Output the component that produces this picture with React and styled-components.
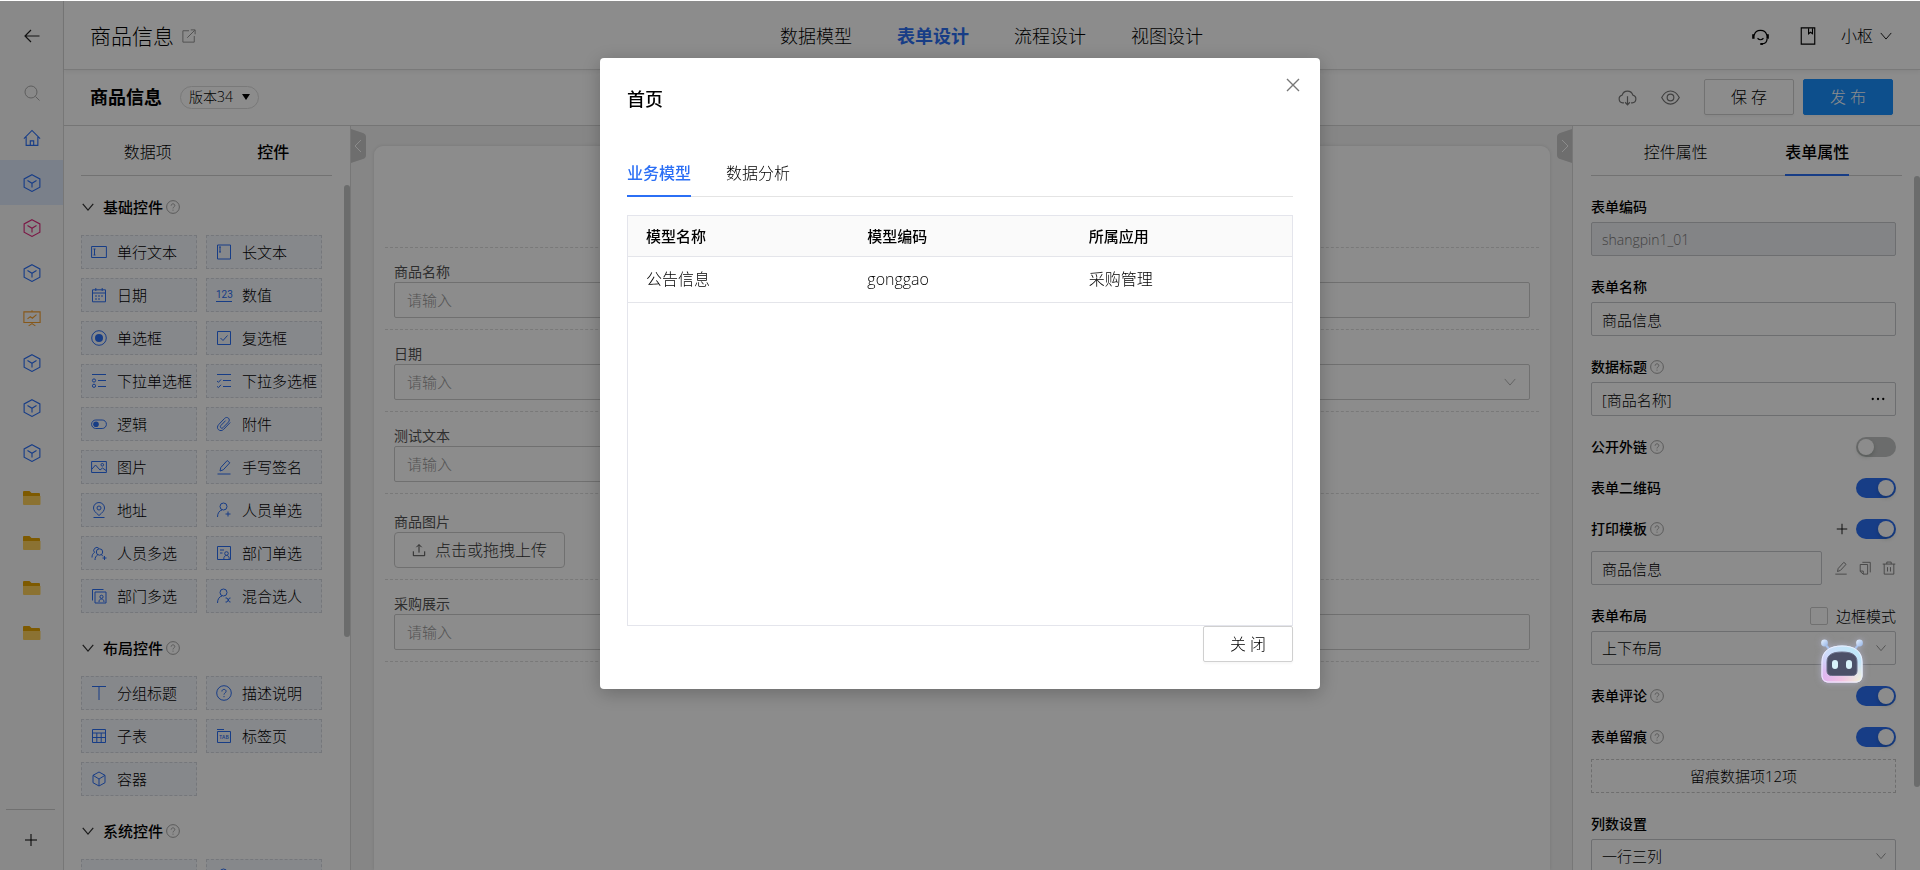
import React from 'react'
import styled, { createGlobalStyle } from 'styled-components'

const BLUE = '#2b6ff5'

const GlobalStyle = createGlobalStyle`
* { box-sizing: border-box; }
body {
  margin: 0;
  background: #fff;
}
body, button, input, select, textarea {
  font-family: "Open Sans", "Noto Sans CJK SC", sans-serif;
  font-weight: 300;
  color: #000;
}
button {
  border: 0;
  padding: 0;
  background: none;
  cursor: pointer;
}
h1, h2, h3, ul { margin: 0; padding: 0; }
ul { list-style: none; }
a { color: inherit; text-decoration: none; }
`

/* ---------- icons ---------- */

const Svg = styled.svg`
  display: block;
  flex: none;
  width: ${p => p.$size || 16}px;
  height: ${p => p.$size || 16}px;
  color: ${p => p.$color || 'currentColor'};
  fill: none;
  stroke: currentColor;
  stroke-width: ${p => p.$stroke || 1};
`

const person = <><circle cx="7.5" cy="4.5" r="3.5" /><path d="M1.5 15c0-4 2-6.5 4.500-7" /></>

const shapes = {
  back: <path d="M15.500 8H1M7 2L1 8l6 6" />,
  search: <><circle cx="7" cy="7" r="6" /><path d="M11.500 11.500L15.500 15.500" /></>,
  home: <><path d="M.8 8.500L8 1.300l7.200 7.200M2.800 7v7.500h10.400V7" /><path d="M6.500 14.500v-4h3v4" /></>,
  cube: <><path d="M8 .6l7 3.800v7.400L8 15.500 1 11.800V4.400z" /><path d="M4 5.800L8 8.200l4-2.400M8 8.200V12" /></>,
  box: <><path d="M8 1l6 3.300v7.400L8 15l-6-3.300V4.300z" /><path d="M2 4.300L8 8l6-3.700M8 8v7" /></>,
  board: <><path d="M.8 2.500h14.400v9.500H.8zM8 1v1.500M8 12v1.500M5 15l3-2 3 2" /><path d="M4 8.800l2.500-2 1.800 1.400L12 5" /></>,
  plus: <path d="M8 2v12M2 8h12" />,
  open: <><path d="M8 2H1v13h13V8" /><path d="M6 10l8.500-8.500M10 1h5v5" /></>,
  down: <path d="M2 4.500l6 7 6-7" />,
  close: <path d="M2 2l12 12M14 2L2 14" />,
  dots: <g fill="currentColor" stroke="none"><circle cx="2" cy="8" r="1.300" /><circle cx="8" cy="8" r="1.300" /><circle cx="14" cy="8" r="1.300" /></g>,
  help: <><circle cx="8" cy="8" r="7.300" /><path d="M5.900 6.500c0-1.400 1-2.100 2.100-2.100s2.100.8 2.100 1.900c0 1.500-2.100 1.700-2.100 3.300M8 11v1.200" /></>,
  headset: <><path d="M2.600 7a5.600 5.600 0 0 1 10.800 0" /><path d="M2 6.200v3.600M14 6.200v3.600" strokeWidth="2" /><path d="M13.500 10c0 2.500-1.500 4-4.500 4.200M5.500 9.500c1.500 1.500 3.500 1.500 5 0" /><path d="M7.800 14.300h2.200" strokeWidth="1.600" /></>,
  book: <><path d="M2 .8h12v14.400H2z" /><path d="M8.500 1v5l1.700-1.300L12 6V1" /></>,
  cloud: <><path d="M5 12.500H4A3.300 3.300 0 0 1 3.500 6 4.700 4.700 0 0 1 12.500 6 3.300 3.300 0 0 1 12 12.500h-1" /><path d="M8 7v7M6 12l2 2.200 2-2.200" /></>,
  eye: <><path d="M.6 8C2.500 4.300 5 2.500 8 2.500S13.500 4.300 15.400 8c-1.900 3.700-4.400 5.500-7.400 5.500S2.500 11.700.6 8z" /><circle cx="8" cy="8" r="2.800" /></>,
  line: <><path d="M.6 2.500h14.800v11H.6z" /><path d="M2.500 5h2M2.500 11h2M3.500 5v6" /></>,
  area: <><path d="M1.500 1h13v14h-13z" /><path d="M3 3h2M3 8h2M4 3v5" /></>,
  date: <><path d="M1.500 2.800h13v12h-13zM1.500 6h13M4.800 1v3M11.200 1v3" /><path d="M4 9h2M7 9h2M10 9h2M4 12h2M7 12h2" /></>,
  radio: <><circle cx="8" cy="8" r="7.300" /><circle cx="8" cy="8" r="4" fill="currentColor" stroke="none" /></>,
  check: <><path d="M1.500 1.500h13v13h-13z" /><path d="M4.500 8l2.500 2.500 4.500-5" /></>,
  list: <><path d="M1 1.500h14M7 7.500h8M7 13.500h8" /><circle cx="3" cy="7.500" r="1.600" /><circle cx="3" cy="12.800" r="1.600" /></>,
  multi: <><path d="M1 1.500h14M7 7.500h8M7 13.500h8" /><path d="M1 8l1.500 1.300L5 6.500M1 13.300l1.500 1.300L5 11.800" /></>,
  toggle: <><rect x=".6" y="4" width="14.800" height="8.500" rx="4.200" /><circle cx="5" cy="8.200" r="2.800" fill="currentColor" stroke="none" /></>,
  clip: <path d="M14.200 6.500l-6.500 6.800c-1.500 1.600-3.700 1.700-5.200.4s-1.300-3.600.1-5l6-6.300c1.100-1.200 2.800-1.200 3.900-.2s1 2.700 0 3.800l-5.500 5.700c-.7.700-1.600.7-2.200.1s-.6-1.500 0-2.200l4.800-5" />,
  image: <><path d="M.6 2.500h14.800v11H.6z" /><path d="M1 10l3.500-4 4.500 5 2.500-2 3.500 2.500" /><circle cx="11.300" cy="5.800" r="1.300" /></>,
  pen: <><path d="M1.500 15h13M4 12l.8-3.500 6.400-7 2.600 2.300-6.500 7z" /></>,
  pin: <><path d="M8 13.500C4.500 10.500 2.500 8.500 2.500 6a5.500 5.500 0 0 1 11 0c0 2.500-2 4.500-5.500 7.500z" /><circle cx="8" cy="6" r="2" /><path d="M2.500 15.500h11" /></>,
  user: <>{person}<path d="M12 9.500v5M9.500 12h5" /></>,
  users: <><path d="M3.500 7.500a3 3 0 1 1 4.500-4" /><circle cx="8.500" cy="7" r="3.200" /><path d="M1 12.500c0-2.500.8-4 2.500-5M4 15c0-2.500 1-4 2.800-5.300M10.500 9.800l1.500 1.500M13.500 11v4M11.500 13h4" /></>,
  dept: <><path d="M1.500 1.500h13v13h-13zM4 5h4M4 8h2.500" /><circle cx="10.500" cy="8.500" r="1.800" /><path d="M7.800 14c0-2.300 1-3.500 2.700-3.500s2.700 1.200 2.700 3.500" /></>,
  depts: <><path d="M4 4h11v11H4zM1.500 12.500v-11h11" /><circle cx="10.500" cy="8.800" r="1.600" /><path d="M8 14c0-2.200 1-3 2.500-3s2.500 1 2.500 3" /></>,
  mixed: <>{person}<path d="M9.500 10h1.500l2.500 4h1M9.500 14h1.500l2.500-4h1" /></>,
  title: <path d="M1 1.500h14M8 1.500V15" />,
  grid: <path d="M1.500 1.500h13v13h-13zM1.500 5h13M1.500 9.500h13M5.800 5v9.500M10.200 5v9.500" />,
  tab: <><path d="M1.500 3.500h13v11h-13zM1 1.500h7" /><text x="8" y="11" fontSize="5" fontWeight="600" textAnchor="middle" fill="currentColor" stroke="none">TAB</text></>,
  upload: <path d="M1.500 9.500v5h13v-5M8 11V2M5 4.800L8 1.800l3 3" />,
  copy: <><path d="M5 1.500h9V13" /><path d="M2.500 4h8.500v11H6l-3.500-3z" /><path d="M2.500 11.500H6V15" /></>,
  trash: <path d="M.8 3.500h14.400M5.500 3.500V1.200h5v2.300M2.500 3.500v11.500h11V3.500M6.300 7v5M9.700 7v5" />,
}

const Icon = ({ name, ...rest }) => (
  <Svg viewBox="0 0 16 16" aria-hidden="true" {...rest}>{shapes[name]}</Svg>
)

const NumberIcon = styled.span`
  flex: none;
  width: 16px;
  border-bottom: 1px solid ${BLUE};
  color: ${BLUE};
  font-family: Roboto, sans-serif;
  font-size: 10px;
  line-height: 12px;
  font-weight: 400;
  text-align: center;
`

const FolderSvg = styled.svg`
  display: block;
  width: 18px;
  height: 16px;
`
const Folder = () => (
  <FolderSvg viewBox="0 0 18 16" aria-hidden="true">
    <path d="M0 2a1 1 0 0 1 1-1h5.500L8.500 3H16a1 1 0 0 1 1 1v4H0z" fill="#e6a400" />
    <path d="M0 6h17.500v8a1 1 0 0 1-1 1H1a1 1 0 0 1-1-1z" fill="#fdcf5c" />
  </FolderSvg>
)

/* ---------- page shell ---------- */

const Page = styled.div`
  display: grid;
  grid-template-columns: 64px minmax(0, 1fr);
  height: 100vh;
  padding-top: 1px;
  overflow: hidden;
`

const Rail = styled.nav`
  display: flex;
  flex-direction: column;
  justify-content: space-between;
  background: #fafafa;
  border-right: 1px solid #d9d9d9;
`
const RailLink = styled.a`
  display: flex;
  align-items: center;
  justify-content: center;
  height: 45px;
  background: ${p => p.$active ? '#dfe9fb' : 'transparent'};
`
const BackLink = styled(RailLink)`
  height: 69px;
`
const RailFoot = styled.div`
  display: flex;
  justify-content: center;
  margin: 0 8px 0 6px;
  padding: 22px 0;
  border-top: 1px solid #ccc;
`

const Main = styled.div`
  display: flex;
  flex-direction: column;
  min-width: 0;
  min-height: 0;
`
const TopBar = styled.header`
  display: grid;
  grid-template-columns: 1fr auto 1fr;
  align-items: center;
  flex: none;
  height: 69px;
  padding: 2px 27px 0 26px;
  border-bottom: 1px solid #dcdcdc;
  box-shadow: 0 2px 4px rgba(0, 0, 0, .06);
`
const Cluster = styled.div`
  display: flex;
  align-items: center;
  gap: ${p => p.$gap}px;
  justify-content: ${p => p.$end ? 'flex-end' : 'flex-start'};
`
const AppName = styled.h1`
  font-size: 21px;
  line-height: 28px;
  font-weight: 300;
`
const TopNav = styled.nav`
  display: flex;
  gap: 45px;
`
const TopLink = styled.a`
  font-size: 18px;
  line-height: 28px;
  font-weight: ${p => p.$active ? 700 : 300};
  color: ${p => p.$active ? BLUE : 'inherit'};
`
const UserButton = styled.button`
  display: flex;
  align-items: center;
  gap: 6px;
  font-size: 16px;
  line-height: 24px;
`

const ToolBar = styled.div`
  display: flex;
  align-items: center;
  justify-content: space-between;
  flex: none;
  height: 56px;
  padding: 0 27px 1px 26px;
  border-bottom: 1px solid #d6d6d6;
`
const FormName = styled.h2`
  font-size: 18px;
  line-height: 28px;
  font-weight: 700;
`
const Version = styled.button`
  display: flex;
  align-items: center;
  gap: 9px;
  height: 23px;
  padding: 0 8px;
  border: 1px solid #dcdcdc;
  border-radius: 12px;
  font-size: 14px;
  line-height: 20px;
`
const Caret = styled.span`
  border: 4px solid transparent;
  border-top: 6px solid #000;
  border-bottom: 0;
`
const Button = styled.button`
  width: 90px;
  height: 36px;
  border: 1px solid ${p => p.$primary ? '#1890ff' : '#d0d0d0'};
  border-radius: 2px;
  background: ${p => p.$primary ? '#1890ff' : '#fff'};
  color: ${p => p.$primary ? '#fff' : '#000'};
  box-shadow: 0 2px 2px rgba(0, 0, 0, .03);
  font-size: 16px;
  line-height: 24px;
`
const Buttons = styled.div`
  display: flex;
  gap: 9px;
`

const Work = styled.div`
  display: grid;
  grid-template-columns: 287px minmax(0, 1fr) 348px;
  flex: 1;
  min-height: 0;
`

const Panel = styled.aside`
  display: flex;
  flex-direction: column;
  min-height: 0;
  overflow: hidden;
  border: 0 solid #d9d9d9;
  border-${p => p.$side}-width: 1px;
`
const PanelTabs = styled.div`
  display: flex;
  flex: none;
  justify-content: space-around;
  height: 50px;
  margin: 0 18px 0 ${p => p.$left}px;
  padding: 0 ${p => p.$inset || 0}px;
  border-bottom: 1px solid #cfcfcf;
`
const PanelTab = styled.button`
  height: 50px;
  padding-top: 4px;
  border-bottom: 2px solid ${p => p.$line ? BLUE : 'transparent'};
  font-size: 16px;
  line-height: 24px;
  font-weight: ${p => p.$active ? 500 : 300};
`
const PanelBody = styled.div`
  display: flex;
  justify-content: space-between;
  flex: 1;
  min-height: 0;
  overflow: hidden;
`
const ScrollTrack = styled.div`
  width: 6px;
  padding-top: ${p => p.$top}px;
`
const ScrollThumb = styled.div`
  height: ${p => p.$share}%;
  border-radius: 3px;
  background: #c3c5c5;
`

/* ---------- control palette ---------- */

const Palette = styled.div`
  padding: 21px 0 0 17px;
`
const SectionTitle = styled.h3`
  display: flex;
  align-items: center;
  height: 20px;
  margin-bottom: 18px;
  font-size: 15px;
  line-height: 20px;
  font-weight: 500;

  > svg:first-child { margin-right: 8px; }
  > svg:last-child { margin-left: 3px; }
`
const Controls = styled.ul`
  display: grid;
  grid-template-columns: 116px 116px;
  gap: 9px;
  margin-bottom: 25px;
`
const Control = styled.button`
  display: flex;
  align-items: center;
  gap: 10px;
  width: 100%;
  height: 34px;
  padding-left: 9px;
  border: 1px dashed #d6d9e0;
  background: #f5f7fd;
  font-size: 15px;
  line-height: 20px;
  white-space: nowrap;
`

/* ---------- canvas ---------- */

const Canvas = styled.main`
  display: grid;
  grid-template-columns: 23px minmax(0, 1fr) 22px;
  background: #f5f5f5;
`
const Handle = styled.button`
  display: block;
  width: 15px;
  height: 34px;
  margin-top: 3px;
  justify-self: ${p => p.$end ? 'end' : 'start'};
`
const HandleShape = styled.svg`
  display: block;
  width: 15px;
  height: 34px;
`
const Sheet = styled.div`
  margin-top: 20px;
  padding: 101px 11px 0;
  border-radius: 9px 9px 0 0;
  background: #fff;
  box-shadow: 0 0 4px rgba(0, 0, 0, .12);
`
const FormRow = styled.div`
  display: grid;
  grid-template-columns: repeat(3, minmax(0, 1fr));
  padding: ${p => p.$tall ? 18 : 14}px 9px 11px;
  border-bottom: 1px dashed #dcdcdc;

  &:first-child { border-top: 1px dashed #dcdcdc; }
`
const FormItem = styled.div`
  grid-column: ${p => p.$wide ? '1 / -1' : 'auto'};
`
const FormLabel = styled.label`
  display: block;
  font-size: 14px;
  line-height: 20px;
  font-weight: 400;
  color: #555;
`
const Stack = styled.div`
  display: grid;
  align-items: center;

  > * { grid-area: 1 / 1; }
  > svg, > button { justify-self: end; margin-right: ${p => p.$inset}px; }
  > svg { pointer-events: none; }
`
const FormInput = styled.input`
  width: 100%;
  height: 36px;
  padding: 0 12px;
  border: 1px solid #ccc;
  border-radius: 2px;
  background: #fff;
  font-size: 15px;

  &::placeholder { color: #999; opacity: 1; }
`
const Upload = styled.button`
  display: flex;
  align-items: center;
  gap: 9px;
  height: 36px;
  padding: 0 17px;
  border: 1px solid #ccc;
  border-radius: 4px;
  font-size: 16px;
  line-height: 24px;
  color: #333;
`

/* ---------- property panel ---------- */

const Props = styled.div`
  display: flex;
  flex-direction: column;
  gap: 21px;
  flex: 1;
  padding: 21px 18px 0;
`
const Field = styled.div`
  display: flex;
  flex-direction: column;
  gap: ${p => p.$gap || 5}px;
`
const FieldHead = styled.div`
  display: flex;
  align-items: center;
  gap: 3px;
  height: 20px;
`
const FieldLabel = styled.label`
  font-size: 14px;
  line-height: 20px;
  font-weight: 500;
`
const HeadEnd = styled.div`
  display: flex;
  align-items: center;
  gap: 7px;
  margin-left: auto;
`
const TextInput = styled.input`
  width: 100%;
  min-width: 0;
  height: 34px;
  padding: 0 10px;
  border: 1px solid #c6c8cc;
  border-radius: 2px;
  background: #fff;
  font-size: 15px;

  &:disabled {
    background: #eff0f4;
    color: #777;
    font-size: 14px;
  }
`
const Select = styled.select`
  appearance: none;
  width: 100%;
  height: 34px;
  padding: 0 10px;
  border: 1px solid #c6c8cc;
  border-radius: 2px;
  background: #fff;
  font-size: 15px;
`
const InputLine = styled.div`
  display: flex;
  align-items: center;
  gap: 10px;

  > input { margin-right: 2px; }
`
const Switch = styled.input`
  appearance: none;
  display: flex;
  align-items: center;
  width: 40px;
  height: 20px;
  margin: 0;
  padding: 0 2px;
  border-radius: 10px;
  background: #c3c5c5;

  &::before {
    content: "";
    width: 16px;
    height: 16px;
    border-radius: 50%;
    background: #fff;
    box-shadow: 0 2px 4px rgba(0, 35, 11, .2);
  }
  &:checked { justify-content: flex-end; background: ${BLUE}; }
`
const CheckLabel = styled.label`
  display: flex;
  align-items: center;
  gap: 8px;
  font-size: 15px;
  line-height: 20px;
`
const CheckBox = styled.input`
  appearance: none;
  width: 18px;
  height: 18px;
  margin: 0;
  border: 1px solid #ccc;
  border-radius: 2px;
`
const TraceButton = styled.button`
  height: 34px;
  border: 1px dashed #c8c8c8;
  font-size: 15px;
  line-height: 20px;
`

/* ---------- dialog ---------- */

const Mask = styled.div`
  position: fixed;
  inset: 1px 0 0;
  display: flex;
  align-items: flex-start;
  justify-content: center;
  padding-top: 57px;
  background: rgba(0, 0, 0, .45);
`
const Dialog = styled.section`
  position: relative;
  width: 720px;
  max-width: 96vw;
  padding: 27px;
  border-radius: 4px;
  background: #fff;
  box-shadow: 0 4px 20px rgba(0, 0, 0, .25);
`
const DialogTitle = styled.h2`
  margin-bottom: 36px;
  font-size: 18px;
  line-height: 28px;
  font-weight: 500;
`
const DialogClose = styled.button`
  position: absolute;
  top: 19px;
  right: 19px;
  color: #777;
`
const DialogTabs = styled.div`
  display: flex;
  gap: 35px;
  height: 48px;
  margin-bottom: 18px;
  border-bottom: 1px solid #e4e4e4;
`
const DialogTab = styled.button`
  height: 48px;
  padding-top: 2px;
  border-bottom: 2px solid ${p => p.$active ? BLUE : 'transparent'};
  color: ${p => p.$active ? BLUE : '#000'};
  font-size: 16px;
  line-height: 24px;
  font-weight: ${p => p.$active ? 500 : 300};
`
const TableBox = styled.div`
  height: 411px;
  border: 1px solid #e4e5ec;
`
const Table = styled.table`
  width: 100%;
  table-layout: fixed;
  border-collapse: collapse;
`
const Th = styled.th`
  height: 40px;
  padding: 0 18px;
  border-bottom: 1px solid #e4e5ea;
  background: #fafafa;
  text-align: left;
  font-size: 15px;
  line-height: 20px;
  font-weight: 500;
`
const Td = styled.td`
  height: 46px;
  padding: 0 18px;
  border-bottom: 1px solid #e4e5ea;
  font-size: 16px;
  line-height: 24px;
`
const DialogFoot = styled.div`
  display: flex;
  justify-content: flex-end;
`

const Assistant = styled.button`
  position: fixed;
  right: 55px;
  bottom: 184px;
  filter: drop-shadow(0 0 3px rgba(200, 200, 240, .5));
`
const RobotSvg = styled.svg`
  display: block;
  width: 46px;
  height: 48px;
`

const Robot = () => (
  <RobotSvg viewBox="0 0 46 48" aria-hidden="true">
    <defs>
      <linearGradient id="shell" x1="0" y1="1" x2="1" y2="0">
        <stop offset="0" stopColor="#dcb5f2" />
        <stop offset=".45" stopColor="#cfdcfb" />
        <stop offset="1" stopColor="#b9ecf8" />
      </linearGradient>
      <linearGradient id="base" x1="0" y1="0" x2="1" y2="0">
        <stop offset="0" stopColor="#e0b0f0" />
        <stop offset=".5" stopColor="#f6c3e2" />
        <stop offset="1" stopColor="#f3f7d8" />
      </linearGradient>
      <linearGradient id="fade" x1="0" y1="0" x2="0" y2="1">
        <stop offset=".5" stopColor="#fff" stopOpacity="0" />
        <stop offset=".9" stopColor="#fff" />
      </linearGradient>
      <mask id="low"><rect width="46" height="48" fill="url(#fade)" /></mask>
      <linearGradient id="ball" x1="0" y1="0" x2="1" y2="1">
        <stop offset="0" stopColor="#e8f2ff" />
        <stop offset="1" stopColor="#93b3e6" />
      </linearGradient>
    </defs>
    <path d="M6 6l5 6M40 6l-5 6" stroke="#a9c2ec" strokeWidth="2" />
    <circle cx="5.500" cy="5" r="3.400" fill="url(#ball)" />
    <circle cx="40.500" cy="5" r="3.400" fill="url(#ball)" />
    <path d="M2.500 24C2.500 13 11 7.500 23 7.500S43.500 13 43.500 24v13c0 5-2.500 7.500-7.500 7.500H10c-5 0-7.500-2.500-7.500-7.500z" fill="url(#shell)" />
    <path d="M2.500 24C2.500 13 11 7.500 23 7.500S43.500 13 43.500 24v13c0 5-2.500 7.500-7.500 7.500H10c-5 0-7.500-2.500-7.500-7.500z" fill="url(#base)" mask="url(#low)" />
    <path d="M3 24C3 13 11 8 23 8s20 5 20 16v13c0 4.500-2.500 7-7 7H10c-4.500 0-7-2.500-7-7z" fill="none" stroke="#eceeff" />
    <path d="M8 24c0-7 5-10 15-10s15 3 15 10v9c0 3-2 4.500-4.500 4.500h-21C10 37.500 8 36 8 33z" fill="#4c5068" stroke="#6a6e88" />
    <rect x="13" y="22" width="6" height="9" rx="3" fill="#d9f2fa" />
    <rect x="27" y="22" width="6" height="9" rx="3" fill="#d9f2fa" />
  </RobotSvg>
)

/* ---------- data ---------- */

const rail = ['home', 'cube', 'cube', 'cube', 'board', 'cube', 'cube', 'cube', 'folder', 'folder', 'folder', 'folder']
const railColors = { 2: '#e0287d', 4: '#f5a030' }

const topNav = ['数据模型', '表单设计', '流程设计', '视图设计']

const sections = [
  {
    title: '基础控件',
    items: [
      ['line', '单行文本'], ['area', '长文本'],
      ['date', '日期'], ['number', '数值'],
      ['radio', '单选框'], ['check', '复选框'],
      ['list', '下拉单选框'], ['multi', '下拉多选框'],
      ['toggle', '逻辑'], ['clip', '附件'],
      ['image', '图片'], ['pen', '手写签名'],
      ['pin', '地址'], ['user', '人员单选'],
      ['users', '人员多选'], ['dept', '部门单选'],
      ['depts', '部门多选'], ['mixed', '混合选人'],
    ],
  },
  {
    title: '布局控件',
    items: [
      ['title', '分组标题'], ['help', '描述说明'],
      ['grid', '子表'], ['tab', '标签页'],
      ['box', '容器'],
    ],
  },
  { title: '系统控件', items: [['line', ''], ['user', '']] },
]

const ControlIcon = ({ name }) => {
  if (name === 'number') return <NumberIcon>123</NumberIcon>
  return <Icon name={name} $color={BLUE} />
}

const Help = () => <Icon name="help" $size={14} $color="#999" />

const FormField = ({ id, label, wide, arrow }) => (
  <FormRow>
    <FormItem $wide={wide}>
      <FormLabel htmlFor={id}>{label}</FormLabel>
      <Stack $inset={13}>
        <FormInput id={id} placeholder="请输入" />
        {arrow && <Icon name="down" $size={14} $color="#aaa" />}
      </Stack>
    </FormItem>
  </FormRow>
)

const SwitchHead = ({ id, label, help, on, extra }) => (
  <FieldHead>
    <FieldLabel htmlFor={id}>{label}</FieldLabel>
    {help && <Help />}
    <HeadEnd>
      {extra}
      <Switch id={id} type="checkbox" role="switch" defaultChecked={on} />
    </HeadEnd>
  </FieldHead>
)

const App = () => (
  <>
    <GlobalStyle />
    <Page>
      <Rail>
        <div>
          <BackLink href="#back" aria-label="返回"><Icon name="back" $stroke={1.2} $color="#222" /></BackLink>
          <RailLink href="#search" aria-label="搜索"><Icon name="search" $color="#aaa" /></RailLink>
          {rail.map((name, i) => (
            <RailLink key={i} href={'#m' + i} aria-label={name} $active={i === 1}>
              {name === 'folder' ? <Folder /> : <Icon name={name} $size={18} $color={railColors[i] || BLUE} />}
            </RailLink>
          ))}
        </div>
        <RailFoot>
          <button aria-label="新增"><Icon name="plus" /></button>
        </RailFoot>
      </Rail>

      <Main>
        <TopBar>
          <Cluster $gap={8}>
            <AppName>商品信息</AppName>
            <Icon name="open" $size={14} $color="#888" />
          </Cluster>
          <TopNav>
            {topNav.map((t, i) => <TopLink key={t} href={'#n' + i} $active={i === 1}>{t}</TopLink>)}
          </TopNav>
          <Cluster $gap={24} $end>
            <Cluster $gap={29}>
              <button aria-label="客服"><Icon name="headset" $size={19} /></button>
              <button aria-label="文档"><Icon name="book" $size={18} /></button>
            </Cluster>
            <UserButton>小枢<Icon name="down" $size={14} /></UserButton>
          </Cluster>
        </TopBar>

        <ToolBar>
          <Cluster $gap={18}>
            <FormName>商品信息</FormName>
            <Version>版本34<Caret /></Version>
          </Cluster>
          <Cluster $gap={24}>
            <button aria-label="下载"><Icon name="cloud" $size={19} $color="#777" /></button>
            <button aria-label="预览"><Icon name="eye" $size={19} $color="#777" /></button>
            <Buttons>
              <Button>保 存</Button>
              <Button $primary>发 布</Button>
            </Buttons>
          </Cluster>
        </ToolBar>

        <Work>
          <Panel $side="right">
            <PanelTabs $left={17}>
              <PanelTab>数据项</PanelTab>
              <PanelTab $active>控件</PanelTab>
            </PanelTabs>
            <PanelBody>
              <Palette>
                {sections.map(s => (
                  <section key={s.title}>
                    <SectionTitle>
                      <Icon name="down" $size={14} $stroke={1.4} $color="#333" />
                      {s.title}
                      <Help />
                    </SectionTitle>
                    <Controls>
                      {s.items.map(([icon, text]) => (
                        <li key={icon}><Control><ControlIcon name={icon} />{text}</Control></li>
                      ))}
                    </Controls>
                  </section>
                ))}
              </Palette>
              <ScrollTrack $top={9}><ScrollThumb $share={66} /></ScrollTrack>
            </PanelBody>
          </Panel>

          <Canvas>
            <Handle aria-label="收起左侧">
              <HandleShape viewBox="0 0 15 34">
                <path d="M0 0l12 4q3 1 3 4v18q0 3-3 4L0 34z" fill="#c8c8c8" />
                <path d="M10 11l-6 6 6 6" fill="none" stroke="#fff" />
              </HandleShape>
            </Handle>
            <Sheet>
              <FormField id="name" label="商品名称" wide />
              <FormField id="day" label="日期" wide arrow />
              <FormField id="test" label="测试文本" />
              <FormRow $tall>
                <FormItem>
                  <FormLabel as="div">商品图片</FormLabel>
                  <Upload><Icon name="upload" $size={14} />点击或拖拽上传</Upload>
                </FormItem>
              </FormRow>
              <FormField id="buy" label="采购展示" wide />
            </Sheet>
            <Handle $end aria-label="收起右侧">
              <HandleShape viewBox="0 0 15 34">
                <path d="M15 0L3 4Q0 5 0 8v18q0 3 3 4l12 4z" fill="#c8c8c8" />
                <path d="M5 11l6 6-6 6" fill="none" stroke="#fff" />
              </HandleShape>
            </Handle>
          </Canvas>

          <Panel $side="left">
            <PanelTabs $left={18} $inset={14}>
              <PanelTab>控件属性</PanelTab>
              <PanelTab $active $line>表单属性</PanelTab>
            </PanelTabs>
            <PanelBody>
              <Props>
                <Field>
                  <FieldHead><FieldLabel htmlFor="code">表单编码</FieldLabel></FieldHead>
                  <TextInput id="code" defaultValue="shangpin1_01" disabled />
                </Field>
                <Field>
                  <FieldHead><FieldLabel htmlFor="fname">表单名称</FieldLabel></FieldHead>
                  <TextInput id="fname" defaultValue="商品信息" />
                </Field>
                <Field>
                  <FieldHead><FieldLabel htmlFor="dtitle">数据标题</FieldLabel><Help /></FieldHead>
                  <Stack $inset={11}>
                    <TextInput id="dtitle" defaultValue="[商品名称]" />
                    <button aria-label="更多"><Icon name="dots" $size={14} /></button>
                  </Stack>
                </Field>
                <SwitchHead id="link" label="公开外链" help />
                <SwitchHead id="qr" label="表单二维码" on />
                <Field $gap={12}>
                  <SwitchHead
                    id="print" label="打印模板" help on
                    extra={<button aria-label="添加模板"><Icon name="plus" $size={14} /></button>}
                  />
                  <InputLine>
                    <TextInput aria-label="模板名称" defaultValue="商品信息" />
                    <button aria-label="编辑"><Icon name="pen" $size={14} $color="#777" /></button>
                    <button aria-label="复制"><Icon name="copy" $size={14} $color="#777" /></button>
                    <button aria-label="删除"><Icon name="trash" $size={14} $color="#777" /></button>
                  </InputLine>
                </Field>
                <Field>
                  <FieldHead>
                    <FieldLabel htmlFor="layout">表单布局</FieldLabel>
                    <HeadEnd><CheckLabel><CheckBox type="checkbox" />边框模式</CheckLabel></HeadEnd>
                  </FieldHead>
                  <Stack $inset={9}>
                    <Select id="layout"><option>上下布局</option></Select>
                    <Icon name="down" $size={12} $color="#777" />
                  </Stack>
                </Field>
                <SwitchHead id="comment" label="表单评论" help on />
                <Field $gap={12}>
                  <SwitchHead id="trace" label="表单留痕" help on />
                  <TraceButton>留痕数据项12项</TraceButton>
                </Field>
                <Field>
                  <FieldHead><FieldLabel htmlFor="cols">列数设置</FieldLabel></FieldHead>
                  <Stack $inset={9}>
                    <Select id="cols"><option>一行三列</option></Select>
                    <Icon name="down" $size={12} $color="#777" />
                  </Stack>
                </Field>
              </Props>
              <ScrollTrack $top={0}><ScrollThumb $share={88} /></ScrollTrack>
            </PanelBody>
          </Panel>
        </Work>
      </Main>
    </Page>

    <Mask>
      <Dialog role="dialog" aria-labelledby="dlg">
        <DialogTitle id="dlg">首页</DialogTitle>
        <DialogClose aria-label="关闭"><Icon name="close" $stroke={1.4} /></DialogClose>
        <DialogTabs>
          <DialogTab $active>业务模型</DialogTab>
          <DialogTab>数据分析</DialogTab>
        </DialogTabs>
        <TableBox>
          <Table>
            <thead>
              <tr><Th>模型名称</Th><Th>模型编码</Th><Th>所属应用</Th></tr>
            </thead>
            <tbody>
              <tr><Td>公告信息</Td><Td>gonggao</Td><Td>采购管理</Td></tr>
            </tbody>
          </Table>
        </TableBox>
        <DialogFoot><Button>关 闭</Button></DialogFoot>
      </Dialog>
    </Mask>

    <Assistant aria-label="智能助手"><Robot /></Assistant>
  </>
)

export default App
